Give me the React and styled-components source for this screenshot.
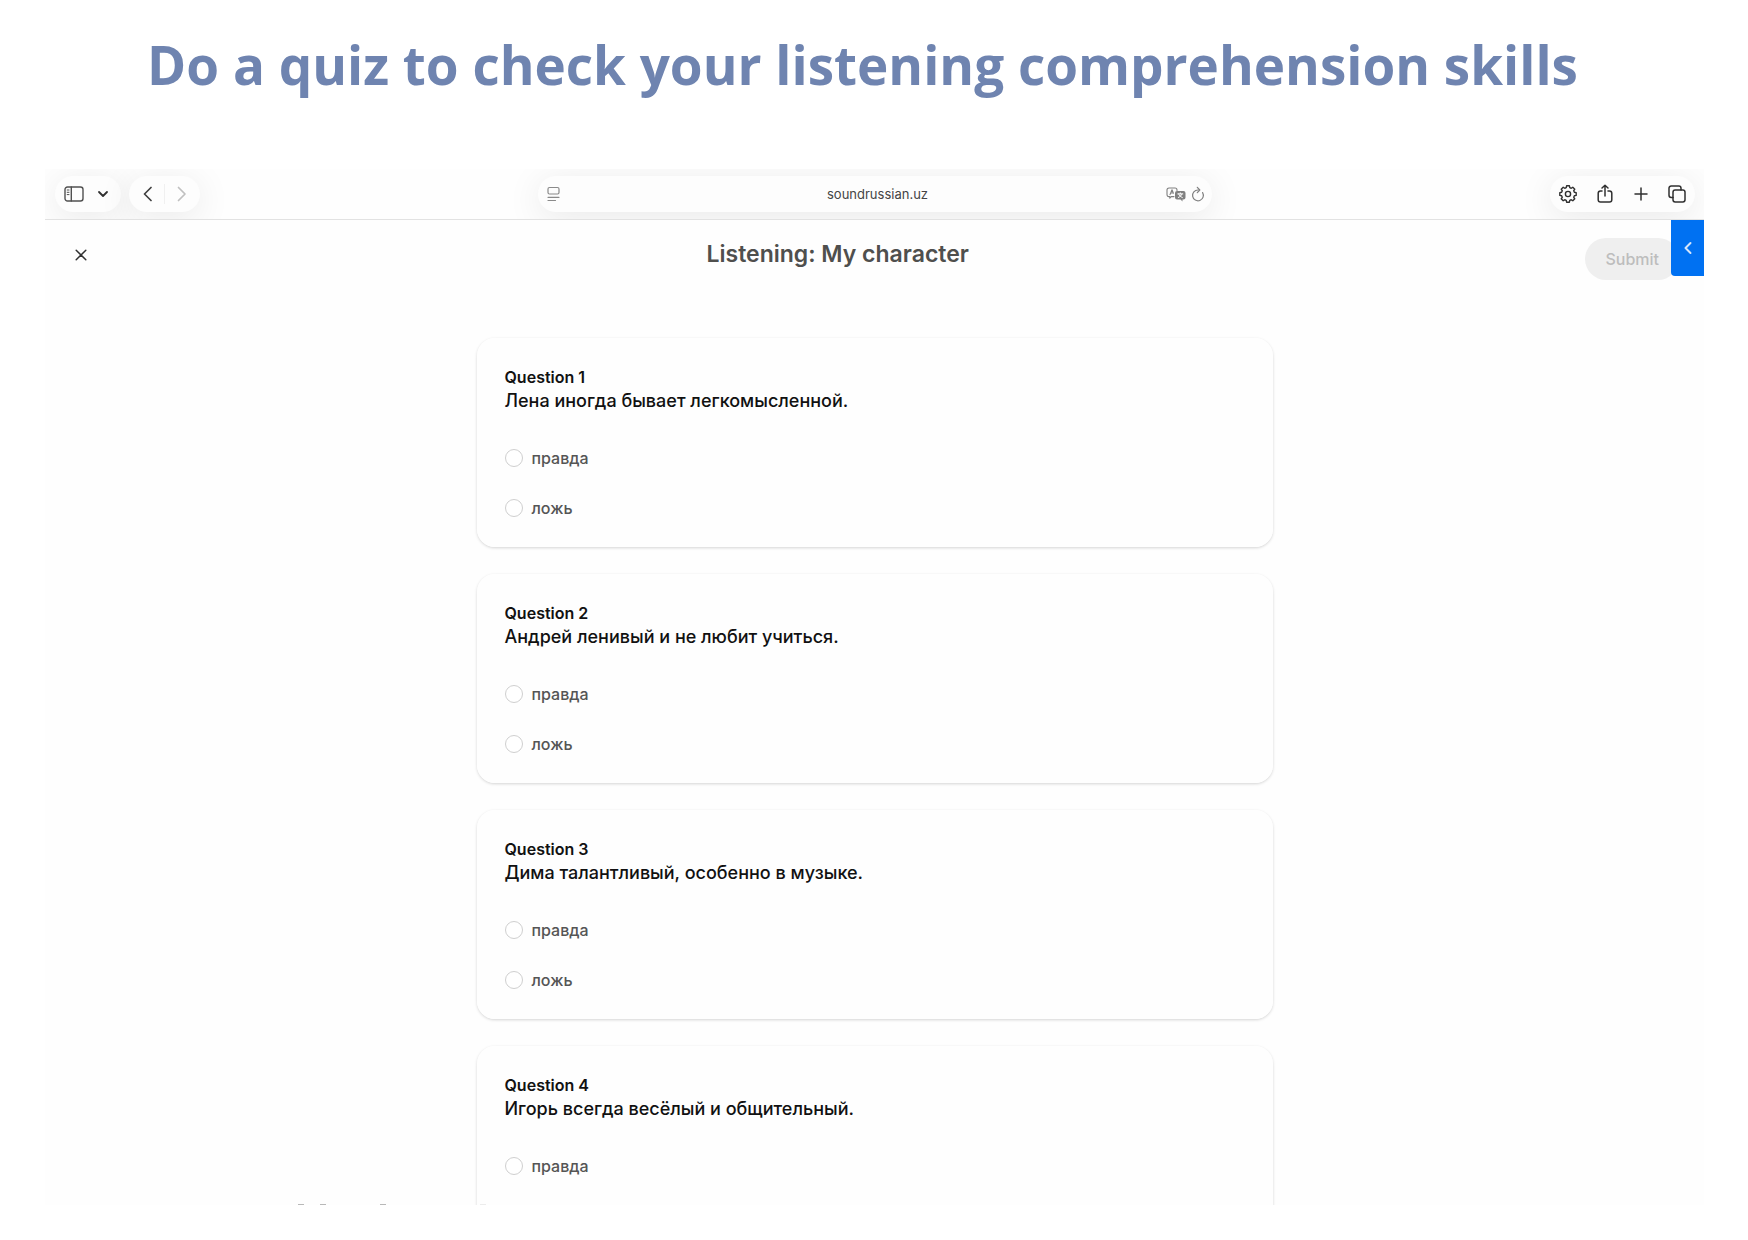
import React, { useState } from "react";
import styled, { createGlobalStyle } from "styled-components";

const GlobalStyle = createGlobalStyle`
  * {
    box-sizing: border-box;
  }

  body {
    margin: 0;
    background: #ffffff;
    font-family: Inter, "Liberation Sans", sans-serif;
  }

  button,
  input {
    font-family: inherit;
  }
`;

const Page = styled.div`
  display: flex;
  flex-direction: column;
  height: 100vh;
  padding: 0 44px 35px 45px;
`;

const Headline = styled.h1`
  margin: 0;
  padding: 27px 24px 0 0;
  height: 169px;
  flex-shrink: 0;
  font-family: "Open Sans", "Noto Sans", sans-serif;
  font-size: 53px;
  font-weight: 700;
  line-height: 76px;
  text-align: center;
  white-space: nowrap;
  color: #6f84b0;
`;

const BrowserWindow = styled.section`
  position: relative;
  display: flex;
  flex-direction: column;
  flex: 1;
  min-height: 0;
  overflow: hidden;
  background: #fefefe;
`;

const Toolbar = styled.div`
  display: grid;
  grid-template-columns: 1fr minmax(0, 674px) 1fr;
  align-items: center;
  flex-shrink: 0;
  height: 51px;
  padding: 0 9px 0 10px;
  overflow: hidden;
  background: #fefefe;
  border-bottom: 1px solid #e2e2e2;
`;

const ToolGroup = styled.div`
  display: flex;
  gap: 8px;
  justify-content: ${(props) => (props.$end ? "flex-end" : "flex-start")};
`;

const Pill = styled.div`
  display: flex;
  align-items: center;
  justify-content: space-between;
  height: 36px;
  width: ${(props) => props.$width || "auto"};
  padding: ${(props) => props.$pad || "0 9px"};
  border-radius: 18px;
  background: #fdfdfd;
  box-shadow: 0 6px 36px rgba(0, 0, 0, 0.09);
`;

const ToolButton = styled.button`
  display: flex;
  align-items: center;
  justify-content: center;
  padding: 0;
  border: none;
  background: none;
  color: ${(props) => props.$color || "#303030"};
  cursor: pointer;
`;

const PillDivider = styled.span`
  width: 1px;
  height: 20px;
  margin: 0 12px;
  background: #f0f0f0;
`;

const AddressInput = styled.input`
  flex: 1;
  min-width: 0;
  padding: 0 0 0 29px;
  border: none;
  outline: none;
  background: none;
  font-size: 13px;
  line-height: 20px;
  text-align: center;
  color: #444444;
`;

const QuizHeader = styled.header`
  display: flex;
  align-items: flex-start;
  justify-content: space-between;
  flex-shrink: 0;
  padding: 18px 25px 0 27px;
`;

const CloseButton = styled(ToolButton)`
  width: 18px;
  height: 34px;
`;

const QuizTitle = styled.h2`
  margin: 0;
  font-size: 23px;
  font-weight: 600;
  line-height: 32px;
  color: #4f4f4d;
`;

const SubmitButton = styled.button`
  height: 42px;
  padding: 0 20px;
  border: none;
  border-radius: 21px;
  background: #efefef;
  font-size: 16px;
  font-weight: 500;
  color: #bdbdbd;
`;

const PanelTab = styled.button`
  position: absolute;
  top: 51px;
  right: 0;
  display: flex;
  align-items: center;
  justify-content: center;
  width: 33px;
  height: 56px;
  padding: 0;
  border: none;
  border-radius: 0 0 0 4px;
  background: #0071f2;
  color: #d6e6fb;
  cursor: pointer;
`;

const QuestionList = styled.main`
  display: flex;
  flex-direction: column;
  gap: 27px;
  width: 100%;
  max-width: 796px;
  margin: 0 auto;
  padding-top: 58px;
`;

const QuestionCard = styled.fieldset`
  flex-shrink: 0;
  min-width: 0;
  min-height: 209px;
  margin: 0;
  padding: 27px 28px 14px;
  border: none;
  border-radius: 18px;
  background: #fefefe;
  box-shadow: 0 1px 3px rgba(0, 0, 0, 0.17);
`;

const QuestionNumber = styled.div`
  font-size: 16px;
  font-weight: 600;
  line-height: 24px;
  color: #111111;
`;

const QuestionText = styled.div`
  margin-bottom: 20px;
  font-size: 18px;
  font-weight: 500;
  line-height: 24px;
  color: #111111;
`;

const Option = styled.label`
  display: flex;
  align-items: center;
  gap: 9px;
  height: 50px;
  font-size: 16px;
  font-weight: 500;
  color: #555555;
  cursor: pointer;
`;

const Radio = styled.input`
  appearance: none;
  width: 18px;
  height: 18px;
  margin: 0;
  border: 1px solid #cfcfcf;
  border-radius: 50%;
  background: #ffffff;
  cursor: pointer;

  &:checked {
    border: 5px solid #0071f2;
  }
`;

const BottomMarks = styled.svg`
  position: absolute;
  left: 250px;
  bottom: 0;
`;

const questions = [
  { text: "Лена иногда бывает легкомысленной.", options: ["правда", "ложь"] },
  { text: "Андрей ленивый и не любит учиться.", options: ["правда", "ложь"] },
  { text: "Дима талантливый, особенно в музыке.", options: ["правда", "ложь"] },
  { text: "Игорь всегда весёлый и общительный.", options: ["правда"] },
];

const Svg = ({ width, height, children, stroke = 1.5 }) => (
  <svg
    width={width}
    height={height}
    viewBox={`0 0 ${width} ${height}`}
    fill="none"
    stroke="currentColor"
    strokeWidth={stroke}
    strokeLinecap="round"
    strokeLinejoin="round"
    aria-hidden="true"
  >
    {children}
  </svg>
);

const SidebarIcon = () => (
  <Svg width={20} height={16} stroke={1.4}>
    <rect x="1" y="1" width="18" height="14" rx="2.5" />
    <path d="M7.3 1v14" />
    <path d="M3.2 4h1.8M3.2 6.3h1.8M3.2 8.6h1.8" strokeWidth="1" />
  </Svg>
);

const TranslateIcon = () => (
  <Svg width={20} height={15} stroke={1.1}>
    <path d="M8 9.6H5.2L3.8 11.2V9.6H3A2 2 0 0 1 1 7.6V3a2 2 0 0 1 2-2h6a2 2 0 0 1 2 2v.6" />
    <path d="M4 7.6 6 2.8l1.4 3.4M4.8 6h2.2" />
    <path
      d="M11 4h6.5a2 2 0 0 1 2 2v4.500a2 2 0 0 1-2 2H16.500v2l-2-2H11a2 2 0 0 1-2-2V6a2 2 0 0 1 2-2Z"
      fill="currentColor"
      stroke="none"
    />
    <path
      d="M11.800 6.900h5M14.300 5.900v1M15.900 7c-.5 1.500-1.800 2.700-3.600 3.500M12.700 7c.5 1.500 1.800 2.700 3.600 3.500"
      stroke="#fdfdfd"
      strokeWidth="1"
    />
  </Svg>
);

// outline of an eight-tooth gear, centred on 9,9
const gearPath = (() => {
  const points = [];
  for (let i = 0; i < 8; i++) {
    const base = (i * Math.PI) / 4;
    [
      [-0.27, 6.6],
      [-0.17, 8.3],
      [0.17, 8.3],
      [0.27, 6.6],
    ].forEach(([offset, r]) => {
      points.push(
        `${(9 + r * Math.sin(base + offset)).toFixed(2)} ${(9 - r * Math.cos(base + offset)).toFixed(2)}`
      );
    });
  }
  return `M${points.join("L")}Z`;
})();

const GearIcon = () => (
  <Svg width={18} height={18} stroke={1.4}>
    <path d={gearPath} />
    <circle cx="9" cy="9" r="2.6" />
  </Svg>
);

const BrowserToolbar = () => (
  <Toolbar>
    <ToolGroup>
      <Pill>
        <ToolButton aria-label="Sidebar" $color="#505050">
          <SidebarIcon />
        </ToolButton>
        <ToolButton aria-label="Tab groups">
          <Svg width={28} height={8} stroke={1.8}>
            <path d="M15 2l4 4 4-4" />
          </Svg>
        </ToolButton>
      </Pill>
      <Pill $pad="0 13px">
        <ToolButton aria-label="Back" $color="#404040">
          <Svg width={10} height={16} stroke={1.7}>
            <path d="M9 1.5 2.5 8 9 14.5" />
          </Svg>
        </ToolButton>
        <PillDivider />
        <ToolButton aria-label="Forward" $color="#c0c0c0">
          <Svg width={10} height={16} stroke={1.7}>
            <path d="M1.5 1.5 8 8l-6.5 6.5" />
          </Svg>
        </ToolButton>
      </Pill>
    </ToolGroup>

    <Pill $pad="0 3px 0 9px">
      <ToolButton aria-label="Page menu" $color="#8a8a8a">
        <Svg width={13} height={16} stroke={1.2}>
          <rect x="1" y="1.5" width="11" height="6.5" rx="1.5" />
          <path d="M1 11.3h11M1 14.5h7.5" />
        </Svg>
      </ToolButton>
      <AddressInput aria-label="Address" defaultValue="soundrussian.uz" />
      <ToolButton aria-label="Translate" $color="#808080">
        <TranslateIcon />
      </ToolButton>
      <ToolButton aria-label="Reload" $color="#808080">
        <Svg width={23} height={17} stroke={1.2}>
          <path d="M16.6 6.6A5.4 5.4 0 1 1 12 4h1.5" />
          <path d="M11.3 1.3 13.8 4 11.3 6.7" />
        </Svg>
      </ToolButton>
    </Pill>

    <ToolGroup $end>
      <Pill $width="145px">
        <ToolButton aria-label="Settings">
          <GearIcon />
        </ToolButton>
        <ToolButton aria-label="Share">
          <Svg width={16} height={20}>
            <path d="M5 7H3.5A2.300 2.300 0 0 0 1.200 9.300v6.400A2.300 2.300 0 0 0 3.500 18h9a2.300 2.300 0 0 0 2.300-2.300V9.300A2.300 2.300 0 0 0 12.500 7H11" />
            <path d="M8 12V1.200M5 4l3-2.800L11 4" />
          </Svg>
        </ToolButton>
        <ToolButton aria-label="New tab">
          <Svg width={14} height={14}>
            <path d="M7 1v12M1 7h12" />
          </Svg>
        </ToolButton>
        <ToolButton aria-label="Show tabs">
          <Svg width={18} height={18}>
            <rect x="5" y="5" width="12" height="12" rx="2.2" />
            <path d="M5 12.5H3.2A2.2 2.2 0 0 1 1 10.3V3.2A2.2 2.2 0 0 1 3.2 1h7.6A2.2 2.2 0 0 1 13 3.2V5" />
          </Svg>
        </ToolButton>
      </Pill>
    </ToolGroup>
  </Toolbar>
);

const Question = ({ number, text, options, answer, onAnswer }) => (
  <QuestionCard aria-label={`Question ${number}`}>
    <QuestionNumber>Question {number}</QuestionNumber>
    <QuestionText>{text}</QuestionText>
    {options.map((option) => (
      <Option key={option}>
        <Radio
          type="radio"
          name={`question-${number}`}
          value={option}
          checked={answer === option}
          onChange={() => onAnswer(option)}
        />
        {option}
      </Option>
    ))}
  </QuestionCard>
);

const App = () => {
  const [answers, setAnswers] = useState({});

  const handleAnswer = (index, option) => {
    setAnswers((prev) => ({ ...prev, [index]: option }));
  };

  const isComplete = Object.keys(answers).length === questions.length;

  return (
    <>
      <GlobalStyle />
      <Page>
        <Headline>Do a quiz to check your listening comprehension skills</Headline>
        <BrowserWindow>
          <BrowserToolbar />
          <QuizHeader>
            <CloseButton aria-label="Close">
              <Svg width={12} height={12}>
                <path d="M1.2 1.2l9.6 9.6M10.8 1.2l-9.6 9.6" />
              </Svg>
            </CloseButton>
            <QuizTitle>Listening: My character</QuizTitle>
            <SubmitButton disabled={!isComplete}>Submit</SubmitButton>
          </QuizHeader>
          <PanelTab aria-label="Open panel">
            <Svg width={8} height={14} stroke={2}>
              <path d="M6.5 2 1.5 7l5 5" />
            </Svg>
          </PanelTab>
          <QuestionList>
            {questions.map((question, index) => (
              <Question
                key={question.text}
                number={index + 1}
                text={question.text}
                options={question.options}
                answer={answers[index]}
                onAnswer={(option) => handleAnswer(index, option)}
              />
            ))}
          </QuestionList>
          <BottomMarks width="240" height="1" aria-hidden="true">
            <path d="M3 0h6v1H3zM25 0h6v1h-6zM85 0h6v1h-6z" fill="#b8b8b8" />
            <path d="M185 0h6v1h-6z" fill="#ececec" />
          </BottomMarks>
        </BrowserWindow>
      </Page>
    </>
  );
};

export default App;
